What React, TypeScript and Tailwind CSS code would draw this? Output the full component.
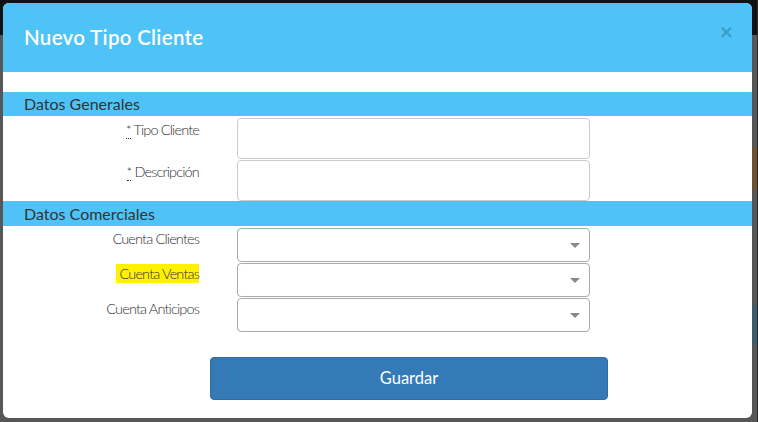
export default function App() {
  const label = "text-right text-[14.5px] font-light text-[#333] tracking-[-0.85px] leading-[20px]";
  return (
    <div className="relative w-[758px] h-[422px] overflow-hidden bg-[#575757] font-['Lato',sans-serif]">
      {/* page behind the backdrop */}
      <div className="h-[35px] bg-[#111]" />
      <div className="absolute right-0 top-[147px] w-[6px] h-[43px] bg-[#6b5230]" />
      <div className="absolute right-0 top-[305px] w-[6px] h-[40px] bg-[#3e5b69]" />
      <div className="absolute right-0 top-0 w-[1px] h-full bg-[#2e2e2e]" />

      {/* modal */}
      <div className="absolute left-[3px] top-[3px] w-[749px] h-[415px] bg-white rounded-[6px] overflow-hidden">
        <div className="relative h-[69px] bg-[#4fc3f7] flex items-center px-[21px]">
          <h1 className="text-white text-[20.5px] font-semibold tracking-[0.3px]">Nuevo Tipo Cliente</h1>
          <span className="absolute right-[19px] top-[17px] text-[23px] font-bold leading-none text-[#3b9cc6]">×</span>
        </div>

        <div className="pt-[20px]">
          <div className="h-[24px] bg-[#4fc3f7] pl-[21px] text-[16px] leading-[24px] text-[#333]">Datos Generales</div>
          <div className="flex flex-col gap-[1px] pt-[2px]">
            <div className="flex items-start">
              <div className={`w-[196px] pt-[2px] ${label}`}>
                <abbr className="no-underline border-b border-dotted border-[#333] text-[13px]">*</abbr> Tipo Cliente
              </div>
              <div className="ml-[38px] w-[353px] h-[41px] border border-[#ccc] rounded-[4px]" />
            </div>
            <div className="flex items-start">
              <div className={`w-[196px] pt-[2px] ${label}`}>
                <abbr className="no-underline border-b border-dotted border-[#333] text-[13px]">*</abbr> Descripción
              </div>
              <div className="ml-[38px] w-[353px] h-[41px] border border-[#ccc] rounded-[4px]" />
            </div>
          </div>

          <div className="h-[25px] bg-[#4fc3f7] pl-[21px] text-[16px] leading-[25px] text-[#333]">Datos Comerciales</div>
          <div className="flex flex-col gap-[1px] pt-[2px]">
            {["Cuenta Clientes", "Cuenta Ventas", "Cuenta Anticipos"].map((t, i) => (
              <div key={t} className="flex items-start">
                <div className={`w-[196px] pt-[1px] ${label}`}>
                  {i === 1 ? <span className="bg-[#fff200] pl-[3px] py-[1px]">{t}</span> : t}
                </div>
                <div className="ml-[38px] w-[353px] h-[34px] border border-[#aaa] rounded-[4px] flex items-center justify-end pr-[9px]">
                  <span className="w-0 h-0 border-l-[5px] border-r-[5px] border-t-[5px] border-l-transparent border-r-transparent border-t-[#888]" />
                </div>
              </div>
            ))}
          </div>

          <div className="pt-[25px] pl-[207px]">
            <button className="w-[398px] h-[43px] bg-[#337ab7] border border-[#2e6da4] rounded-[4px] text-white text-[16.5px]">
              Guardar
            </button>
          </div>
        </div>
      </div>
    </div>
  );
}
